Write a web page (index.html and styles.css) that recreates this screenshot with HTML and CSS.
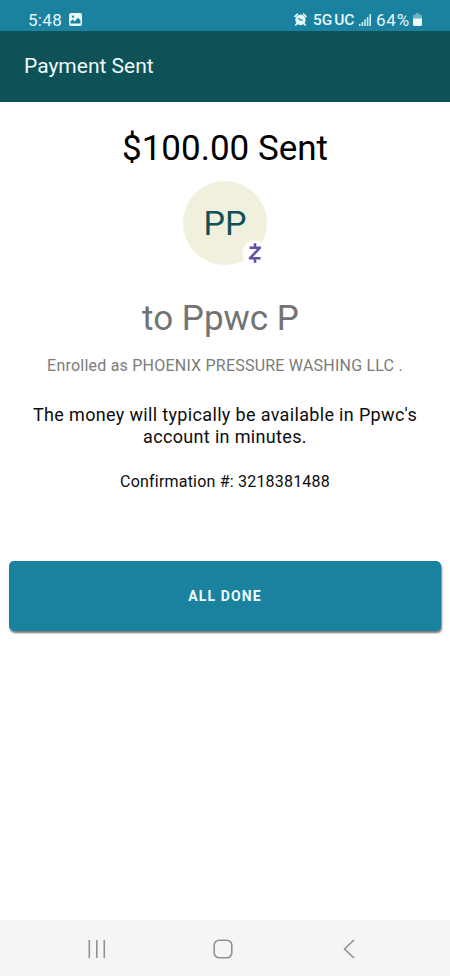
FILE: index.html
```html
<!DOCTYPE html>
<html lang="en">
<head>
<meta charset="utf-8">
<title>Payment Sent</title>
<link rel="stylesheet" href="styles.css">
</head>
<body>
<div class="status">
  <span class="clock">5:48</span>
  <svg class="pic" width="13" height="13" viewBox="0 0 13 13"><rect width="13" height="13" rx="2" fill="#e6f8fa"/><path d="M1.500 10.500V8.600l2.200-2.200 2 2 3.300-3.600 2.500 2.800v2.900z" fill="#1a819f"/><circle cx="4" cy="3.700" r="1.100" fill="#1a819f"/></svg>
  <svg class="alarm" width="13" height="13" viewBox="0 0 13 13"><circle cx="6.5" cy="6.8" r="5.2" fill="#e6f8fa"/><path d="M1 3.400L3.500 1M12 3.400L9.500 1M3 10.600L1.700 12M10 10.600l1.300 1.400" stroke="#e6f8fa" stroke-width="1.6" stroke-linecap="round"/><path d="M4.300 4.800l2.300 2.400 2.200-.2" fill="none" stroke="#1a819f" stroke-width="1.2"/></svg>
  <span class="network">5G UC</span>
  <svg class="signal" width="12" height="12" viewBox="0 0 12 12" fill="#d0edf2"><path d="M0 10h1.600v2H0zM2.600 8h1.600v4H2.600zM5.200 5.500h1.600V12H5.200zM7.800 3h1.600v9H7.800zM10.400 0H12v12h-1.600z"/></svg>
  <span class="charge">64%</span>
  <svg class="battery" width="9" height="13" viewBox="0 0 9 13"><path d="M3 0h3v1.500h1.500Q9 1.500 9 3v3H0V3q0-1.500 1.500-1.500H3z" fill="#71b2c4"/><path d="M0 5.500h9v6q0 1.500-1.500 1.500h-6Q0 13 0 11.500z" fill="#effcff"/></svg>
</div>
<header class="header"><h1>Payment Sent</h1></header>
<main class="content">
  <h2 class="amount">$100.00 Sent</h2>
  <div class="avatar">PP
    <svg class="badge" width="26" height="26" viewBox="0 0 26 26"><circle cx="13" cy="13" r="12.5" fill="#fff"/><path d="M7.500 7.700h10.500L8 18.200h10.500M13 3.200v4.500M13 18.200v4.500" fill="none" stroke="#6750a4" stroke-width="2.6" stroke-linejoin="round"/></svg>
  </div>
  <p class="payee">to Ppwc P</p>
  <p class="enrolled">Enrolled as PHOENIX PRESSURE WASHING LLC .</p>
  <p class="note">The money will typically be available in Ppwc's<br>account in minutes.</p>
  <p class="confirmation">Confirmation #: 3218381488</p>
  <button class="done">ALL DONE</button>
</main>
<nav class="nav">
  <svg width="20" height="20" viewBox="0 0 20 20"><path d="M2.300 1v18M9.800 1v18M17.300 1v18"/></svg>
  <svg width="20" height="20" viewBox="0 0 20 20"><rect x="1.2" y="1.2" width="17.6" height="17.6" rx="5"/></svg>
  <svg width="20" height="20" viewBox="0 0 20 20"><path d="M15 1L5.500 10l9.500 9"/></svg>
</nav>
</body>
</html>
```
FILE: styles.css
```css
* { box-sizing: border-box; }
body {
  margin: 0;
  height: 976px;
  display: flex;
  flex-direction: column;
  background: #fff;
  font-family: Roboto, "Liberation Sans", sans-serif;
}
h1, h2, p { margin: 0; font-weight: 400; white-space: nowrap; }
.status {
  height: 31px;
  padding: 8px 28px 0 28px;
  display: flex;
  align-items: center;
  background: #1a819f;
  color: #e6f8fa;
  font-size: 17px;
  line-height: 22px;
}
.clock { width: 41px; letter-spacing: 0.3px; }
.alarm { margin-left: auto; }
.network { width: 46px; margin-left: 6px; font-size: 15.5px; font-weight: 500; word-spacing: -2px; white-space: nowrap; }
.signal { margin-right: 5px; }
.charge { width: 37px; letter-spacing: 0.8px; }
.header {
  height: 71px;
  padding: 0 24px 2px;
  display: flex;
  align-items: center;
  background: #0e5157;
  color: #effafa;
}
.header h1 { font-size: 21px; }
.content {
  flex: 1;
  display: flex;
  flex-direction: column;
  align-items: center;
  padding: 26px 9px 0;
  color: #0c0c0c;
}
.amount { font-size: 35px; line-height: 42px; color: #000; }
.avatar {
  position: relative;
  width: 84px;
  height: 84px;
  margin-top: 11px;
  border-radius: 50%;
  background: #f1f0dd;
  color: #0e5157;
  font-size: 34px;
  line-height: 84px;
  text-align: center;
}
.badge { position: absolute; left: 59px; top: 59px; }
.payee { margin-top: 33px; padding-right: 9px; font-size: 35px; line-height: 42px; color: #737373; }
.enrolled { margin-top: 16px; font-size: 16px; line-height: 20px; letter-spacing: 0.22px; color: #7b7b7b; }
.note { margin-top: 28px; font-size: 18px; line-height: 22px; letter-spacing: 0.34px; text-align: center; }
.confirmation { margin-top: 24px; font-size: 16px; line-height: 20px; letter-spacing: 0.2px; }
.done {
  width: 100%;
  height: 70px;
  margin-top: 69px;
  padding: 0;
  border: 0;
  border-radius: 5px;
  background: #1a819f;
  box-shadow: 1px 2px 2px #777;
  color: #effcff;
  font: 700 14px Roboto, "Liberation Sans", sans-serif;
  letter-spacing: 1.1px;
}
.nav {
  height: 56px;
  padding: 2px 91px 0 87px;
  display: flex;
  align-items: center;
  justify-content: space-between;
  background: #f4f5f7;
}
.nav svg { fill: none; stroke: #929294; stroke-width: 1.6; }
```
